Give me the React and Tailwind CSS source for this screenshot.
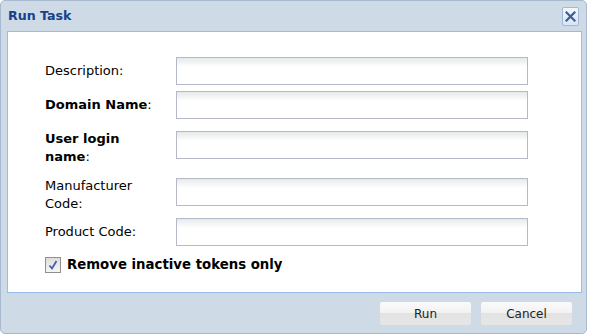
export default function App() {
  const font = { fontFamily: '"DejaVu Sans", Verdana, sans-serif' };
  const input =
    "h-[28px] w-[352px] shrink-0 border border-[#b5b8c8] bg-[linear-gradient(to_bottom,#e6eaea,#ffffff_9px)]";
  const btn =
    "w-[93px] h-[25px] rounded-[3px] border border-[#d3d9e0] bg-[linear-gradient(to_bottom,#fbfbfb_0%,#f1f1f1_50%,#e3e3e3_50%,#e6e6e6_100%)] text-[12px] text-[#222]";
  return (
    <div className="w-[589px] h-[336px] bg-white" style={font}>
      <div className="w-[587px] h-[334px] rounded-[5px] border border-[#a7b9cf] bg-[#cfdae7] flex flex-col">
        {/* title bar */}
        <div className="h-[30px] flex items-start justify-between pl-[7px] pr-[7px]">
          <div className="pt-[6px] text-[12.6px] leading-[18px] font-bold text-[#15428b]">Run Task</div>
          <div className="mt-[6px] w-[17px] h-[19px] rounded-[2px] border border-[#9fb8dc] bg-[linear-gradient(to_bottom,#f4f8fd,#d9e5f4)] flex items-center justify-center">
            <svg width="11" height="11" viewBox="0 0 11 11">
              <path d="M1.5 1.5 L9.5 9.5 M9.5 1.5 L1.5 9.5" stroke="#3e5e99" strokeWidth="2.2" strokeLinecap="square" />
            </svg>
          </div>
        </div>
        {/* body */}
        <div className="ml-[6px] w-[575px] h-[262px] border border-[#99bbe8] bg-white pl-[37px] pt-[25px] text-[13px] text-black">
          <div className="flex items-center">
            <div className="w-[131px] leading-[18px]">Description:</div>
            <div className={input} />
          </div>
          <div className="flex items-center mt-[6px]">
            <div className="w-[131px] leading-[18px] font-bold">Domain Name<span className="font-normal">:</span></div>
            <div className={input} />
          </div>
          <div className="flex items-start mt-[11px]">
            <div className="w-[131px] pr-[14px] leading-[18px] font-bold">User login name<span className="font-normal">:</span></div>
            <div className={"mt-[1px] " + input} />
          </div>
          <div className="flex items-start mt-[11px]">
            <div className="w-[131px] pr-[14px] leading-[18px]">Manufacturer Code:</div>
            <div className={"mt-[1px] " + input} />
          </div>
          <div className="flex items-center mt-[5px]">
            <div className="w-[131px] leading-[18px]">Product Code:</div>
            <div className={input} />
          </div>
          <div className="flex items-center mt-[10px]">
            <div className="w-[16px] h-[16px] border border-[#8f9090] bg-[linear-gradient(to_bottom,#dedede,#f6f6f6)] flex items-center justify-center">
              <svg width="12" height="12" viewBox="0 0 12 12">
                <path d="M2.5 6.5 L5 9.5 L9.5 2" fill="none" stroke="#4a5ea8" strokeWidth="1.8" />
              </svg>
            </div>
            <div className="ml-[6px] font-bold text-[13.3px] leading-[18px]">Remove inactive tokens only</div>
          </div>
        </div>
        {/* footer */}
        <div className="flex justify-end gap-[8px] pr-[13px] pt-[8px]">
          <button className={btn}>Run</button>
          <button className={btn}>Cancel</button>
        </div>
      </div>
    </div>
  );
}
